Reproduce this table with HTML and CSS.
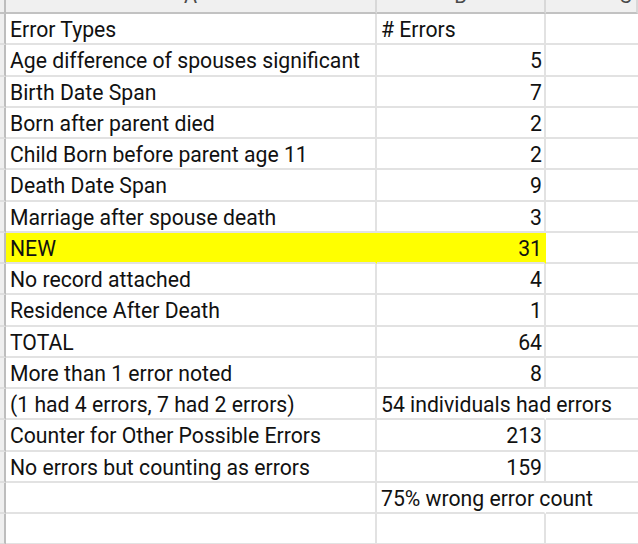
FILE: index.html
```html
<!DOCTYPE html>
<html>
<head>
<meta charset="utf-8">
<link rel="stylesheet" href="styles.css">
</head>
<body>
<div class="sheet">
  <div class="corner"></div>
  <div class="colhead"><span>A</span></div>
  <div class="colhead"><span>B</span></div>
  <div class="colhead last"><span>C</span></div>

  <div class="rowhead"></div><div class="cell">Error Types</div><div class="cell">&#35; Errors</div><div class="cell c"></div>
  <div class="rowhead"></div><div class="cell">Age difference of spouses significant</div><div class="cell num">5</div><div class="cell c"></div>
  <div class="rowhead"></div><div class="cell">Birth Date Span</div><div class="cell num">7</div><div class="cell c"></div>
  <div class="rowhead"></div><div class="cell">Born after parent died</div><div class="cell num">2</div><div class="cell c"></div>
  <div class="rowhead"></div><div class="cell">Child Born before parent age 11</div><div class="cell num">2</div><div class="cell c"></div>
  <div class="rowhead"></div><div class="cell">Death Date Span</div><div class="cell num">9</div><div class="cell c"></div>
  <div class="rowhead"></div><div class="cell">Marriage after spouse death</div><div class="cell num">3</div><div class="cell c"></div>
  <div class="rowhead"></div><div class="cell fill">NEW</div><div class="cell num fill">31</div><div class="cell c"></div>
  <div class="rowhead"></div><div class="cell">No record attached</div><div class="cell num">4</div><div class="cell c"></div>
  <div class="rowhead"></div><div class="cell">Residence After Death</div><div class="cell num">1</div><div class="cell c"></div>
  <div class="rowhead"></div><div class="cell">TOTAL</div><div class="cell num">64</div><div class="cell c"></div>
  <div class="rowhead"></div><div class="cell">More than 1 error noted</div><div class="cell num">8</div><div class="cell c"></div>
  <div class="rowhead"></div><div class="cell">(1 had 4 errors, 7 had 2 errors)</div><div class="cell spill">54 individuals had errors</div><div class="cell c"></div>
  <div class="rowhead"></div><div class="cell">Counter for Other Possible Errors</div><div class="cell num">213</div><div class="cell c"></div>
  <div class="rowhead"></div><div class="cell">No errors but counting as errors</div><div class="cell num">159</div><div class="cell c"></div>
  <div class="rowhead"></div><div class="cell"></div><div class="cell spill">75% wrong error count</div><div class="cell c"></div>
  <div class="rowhead"></div><div class="cell"></div><div class="cell"></div><div class="cell c"></div>
</div>
</body>
</html>
```
FILE: styles.css
```css
html, body {
  margin: 0;
  padding: 0;
  background: #ffffff;
  overflow: hidden;
}

.sheet {
  display: grid;
  grid-template-columns: 6px 371px 169px 1fr;
  grid-template-rows: 14px repeat(17, 31.25px);
  width: 638px;
  height: 544px;
  font-family: Roboto, "Liberation Sans", sans-serif;
  font-size: 21.2px;
  color: #111111;
  overflow: hidden;
}

.corner {
  background: #efefef;
  border-right: 2px solid #bdbdbd;
  border-bottom: 2px solid #c2c2c2;
  box-sizing: border-box;
}

.colhead {
  background: #f0f0f0;
  border-right: 2px solid #d8d8d8;
  border-bottom: 2px solid #c2c2c2;
  box-sizing: border-box;
  overflow: hidden;
  text-align: center;
  color: #4a4a4a;
  font-size: 20px;
}

.colhead span {
  display: block;
  line-height: 20px;
  margin-top: -14px;
}

.colhead.last span {
  text-align: left;
  padding-left: 73px;
}

.rowhead {
  background: #efefef;
  border-right: 2px solid #bdbdbd;
  border-bottom: 2px solid #dedede;
  box-sizing: border-box;
}

.cell {
  box-sizing: border-box;
  border-right: 2px solid #e2e2e2;
  border-bottom: 2px solid #e2e2e2;
  padding: 2px 2px 0 4px;
  line-height: 27px;
  white-space: nowrap;
}

.cell.num {
  text-align: right;
}

.cell.c {
  border-right: none;
}

.cell.spill {
  overflow: visible;
  border-right-color: transparent;
  position: relative;
  z-index: 1;
}

.cell.fill {
  background: #ffff00;
  border-right-color: #ffff00;
  border-bottom-color: #e2e2e2;
}
```
